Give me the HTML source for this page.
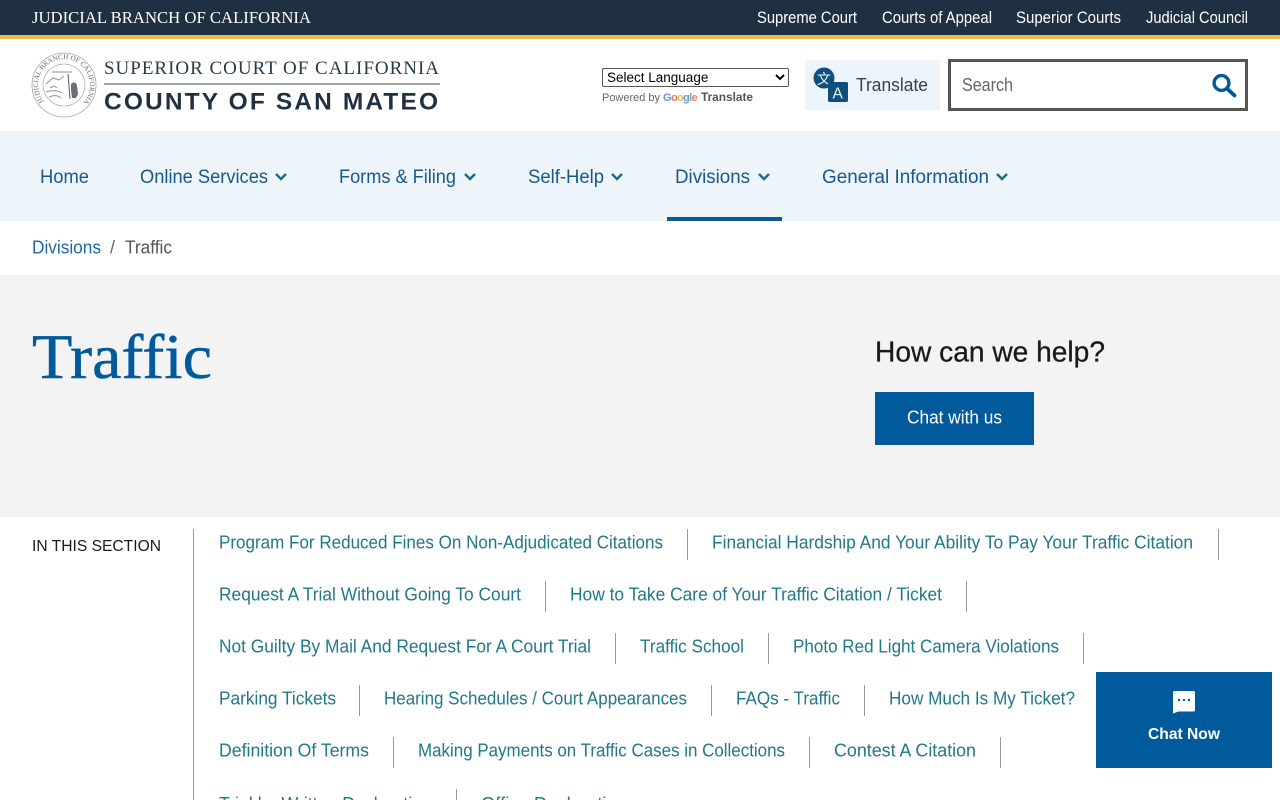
<!DOCTYPE html>
<html lang="en"><head><meta charset="utf-8"><title>Traffic - Superior Court of San Mateo</title>
<style>
html,body{margin:0;padding:0;background:#fff;width:1280px;height:800px;overflow:hidden}
.b{position:absolute}
svg{position:absolute;left:0;top:0}
text{font-family:"Liberation Sans",sans-serif}
.s{font-family:"Liberation Serif",serif}
select{position:absolute;left:602px;top:68px;width:187px;height:19px;font:13.5px "Liberation Sans",sans-serif;color:#000;background:#fff;border:1px solid #555;border-radius:2px;padding:0;margin:0;box-sizing:border-box}
input{position:absolute;left:948px;top:59px;width:300px;height:52px;box-sizing:border-box;border:3px solid #555;background:#fff;padding:0 50px 0 11px;font:18px "Liberation Sans",sans-serif;color:#555;outline:0;margin:0}
.nav text{font-size:19px;fill:#17598c}
.sec text{font-size:18px;fill:#21788a}
.top text{font-size:16.5px;fill:#fff}
</style></head><body>
<div class="b" style="left:0;top:0;width:1280px;height:35px;background:#1f3042"></div>
<div class="b" style="left:0;top:35px;width:1280px;height:4px;background:#efbb47"></div>
<div class="b" style="left:805px;top:60px;width:135px;height:50px;background:#edf4fa"></div>
<div class="b" style="left:0;top:131px;width:1280px;height:90px;background:#edf4fa"></div>
<div class="b" style="left:667px;top:217px;width:115px;height:4px;background:#0f5a8a"></div>
<div class="b" style="left:0;top:275px;width:1280px;height:242px;background:#f3f3f3"></div>
<div class="b" style="left:875px;top:392px;width:159px;height:53px;background:#005a9c"></div>
<div class="b" style="left:193px;top:529px;width:1px;height:271px;background:#999"></div>
<select><option>Select Language</option></select>
<input type="text" aria-label="Search">

<svg width="1280" height="800" viewBox="0 0 1280 800" style="pointer-events:none">
<g class="top">
<text x="32" y="23" textLength="279" lengthAdjust="spacingAndGlyphs" style="font-family:'Liberation Serif',serif;font-size:17px">JUDICIAL BRANCH OF CALIFORNIA</text>
<text x="757" y="23" textLength="100" lengthAdjust="spacingAndGlyphs">Supreme Court</text>
<text x="882" y="23" textLength="110" lengthAdjust="spacingAndGlyphs">Courts of Appeal</text>
<text x="1016" y="23" textLength="105" lengthAdjust="spacingAndGlyphs">Superior Courts</text>
<text x="1146" y="23" textLength="102" lengthAdjust="spacingAndGlyphs">Judicial Council</text>
</g>

<!-- seal -->
<g fill="none" stroke="#a2a6aa">
<circle cx="64" cy="85" r="32" stroke-width=".8"/>
<circle cx="64" cy="85" r="21" stroke-width=".7"/>
</g>
<defs><path id="ring" d="M44 101.600A26 26 0 1 1 84 101.600"/></defs>
<text font-size="7" fill="#666" style="font-family:'Liberation Serif',serif"><textPath href="#ring" textLength="118" lengthAdjust="spacing">JUDICIAL BRANCH OF CALIFORNIA</textPath></text>
<path d="M46 84l7-6 6 2 5-4M46 92c6-2 11-2 16 1M49 97c4-2 9-2 12 1M50 88l4-2 3 2M52 72h20" fill="none" stroke="#8f9499" stroke-width="1"/>
<path d="M68 74l2 25" stroke="#555b62" stroke-width="1" fill="none"/>
<path d="M71 84c3-3 6-1 6 2l1 8-2 4h-4l-1-8z" fill="#6a7076"/>

<text x="104" y="74" font-size="19" fill="#2b3a4a" textLength="335" lengthAdjust="spacing" style="font-family:'Liberation Serif',serif">SUPERIOR COURT OF CALIFORNIA</text>
<rect x="104" y="83" width="336" height="2" fill="#a0a5aa"/>
<text x="104" y="109.500" font-size="24.500" font-weight="700" fill="#1f3042" textLength="334" lengthAdjust="spacing">COUNTY OF SAN MATEO</text>

<!-- powered by -->
<text x="602" y="101" font-size="11" fill="#666" textLength="58" lengthAdjust="spacingAndGlyphs">Powered by</text>
<g font-size="11" font-weight="700">
<text x="663" y="101" fill="#6d95dc">G</text><text x="671" y="101" fill="#e07a6e">o</text><text x="677" y="101" fill="#e8c05c">o</text><text x="683" y="101" fill="#6d95dc">g</text><text x="689" y="101" fill="#74b57e">l</text><text x="691.500" y="101" fill="#e07a6e">e</text>
</g>
<text x="701" y="101" font-size="12" font-weight="700" fill="#555" textLength="52" lengthAdjust="spacingAndGlyphs">Translate</text>

<!-- translate icon -->
<circle cx="824" cy="78" r="10.500" fill="#0f4f80"/>
<text x="817" y="84" font-size="14" fill="#edf4fa" style="font-family:'Noto Sans CJK SC',sans-serif">文</text>
<rect x="828" y="82" width="20" height="20" rx="1.500" fill="#0f4f80"/>
<text x="832.500" y="98.500" font-size="15.500" fill="#edf4fa">A</text>
<text x="856" y="91" font-size="18.500" fill="#333f4d" textLength="72" lengthAdjust="spacingAndGlyphs">Translate</text>

<!-- search -->
<text x="962" y="91" font-size="18" fill="#666" textLength="51" lengthAdjust="spacingAndGlyphs">Search</text>
<circle cx="1221.500" cy="83" r="7.400" fill="none" stroke="#00599c" stroke-width="3.400"/>
<path d="M1227.500 89l7 6.500" stroke="#00599c" stroke-width="3.800" stroke-linecap="round"/>

<!-- nav -->
<g class="nav">
<text x="40" y="183" textLength="49" lengthAdjust="spacingAndGlyphs">Home</text>
<text x="140" y="183" textLength="128" lengthAdjust="spacingAndGlyphs">Online Services</text>
<text x="339" y="183" textLength="117" lengthAdjust="spacingAndGlyphs">Forms &amp; Filing</text>
<text x="528" y="183" textLength="76" lengthAdjust="spacingAndGlyphs">Self-Help</text>
<text x="675" y="183" textLength="75" lengthAdjust="spacingAndGlyphs">Divisions</text>
<text x="822" y="183" textLength="167" lengthAdjust="spacingAndGlyphs">General Information</text>
</g>
<g fill="none" stroke="#1a6b80" stroke-width="2.400">
<path d="M276 174l5 5 5-5"/>
<path d="M465 174l5 5 5-5"/>
<path d="M612 174l5 5 5-5"/>
<path d="M759 174l5 5 5-5"/>
<path d="M997 174l5 5 5-5"/>
</g>

<!-- breadcrumb -->
<text x="32" y="253.500" font-size="18" fill="#1f6aa5" textLength="69" lengthAdjust="spacingAndGlyphs">Divisions</text>
<text x="110" y="253.500" font-size="18" fill="#666">/</text>
<text x="125" y="253.500" font-size="18" fill="#555" textLength="47" lengthAdjust="spacingAndGlyphs">Traffic</text>

<!-- hero -->
<text x="32" y="378" font-size="64" fill="#005a9c" stroke="#005a9c" stroke-width=".5" textLength="180" lengthAdjust="spacingAndGlyphs" style="font-family:'Liberation Serif',serif">Traffic</text>
<text x="875" y="361.500" font-size="29" fill="#1a1a1a" stroke="#1a1a1a" stroke-width=".3" textLength="230" lengthAdjust="spacingAndGlyphs">How can we help?</text>
<text x="907" y="423.500" font-size="18" fill="#fff" textLength="95" lengthAdjust="spacingAndGlyphs">Chat with us</text>

<!-- section -->
<text x="32" y="551" font-size="15.500" fill="#1a1a1a" textLength="129" lengthAdjust="spacingAndGlyphs">IN THIS SECTION</text>
<g class="sec">
<text x="219" y="548.500" textLength="444" lengthAdjust="spacingAndGlyphs">Program For Reduced Fines On Non-Adjudicated Citations</text>
<text x="712" y="548.500" textLength="481" lengthAdjust="spacingAndGlyphs">Financial Hardship And Your Ability To Pay Your Traffic Citation</text>
<text x="219" y="600.500" textLength="302" lengthAdjust="spacingAndGlyphs">Request A Trial Without Going To Court</text>
<text x="570" y="600.500" textLength="372" lengthAdjust="spacingAndGlyphs">How to Take Care of Your Traffic Citation / Ticket</text>
<text x="219" y="652.500" textLength="372" lengthAdjust="spacingAndGlyphs">Not Guilty By Mail And Request For A Court Trial</text>
<text x="640" y="652.500" textLength="104" lengthAdjust="spacingAndGlyphs">Traffic School</text>
<text x="793" y="652.500" textLength="266" lengthAdjust="spacingAndGlyphs">Photo Red Light Camera Violations</text>
<text x="219" y="704.500" textLength="117" lengthAdjust="spacingAndGlyphs">Parking Tickets</text>
<text x="384" y="704.500" textLength="303" lengthAdjust="spacingAndGlyphs">Hearing Schedules / Court Appearances</text>
<text x="736" y="704.500" textLength="104" lengthAdjust="spacingAndGlyphs">FAQs - Traffic</text>
<text x="889" y="704.500" textLength="186" lengthAdjust="spacingAndGlyphs">How Much Is My Ticket?</text>
<text x="219" y="756.500" textLength="150" lengthAdjust="spacingAndGlyphs">Definition Of Terms</text>
<text x="418" y="756.500" textLength="367" lengthAdjust="spacingAndGlyphs">Making Payments on Traffic Cases in Collections</text>
<text x="834" y="756.500" textLength="142" lengthAdjust="spacingAndGlyphs">Contest A Citation</text>
<text x="219" y="810" textLength="213" lengthAdjust="spacingAndGlyphs">Trial by Written Declaration</text>
<text x="481" y="810" textLength="146" lengthAdjust="spacingAndGlyphs">Office Declaration</text>
</g>
<g fill="#999">
<rect x="687" y="529" width="1" height="31"/><rect x="1218" y="529" width="1" height="31"/>
<rect x="545" y="581" width="1" height="31"/><rect x="966" y="581" width="1" height="31"/>
<rect x="615" y="633" width="1" height="31"/><rect x="768" y="633" width="1" height="31"/><rect x="1083" y="633" width="1" height="31"/>
<rect x="359" y="685" width="1" height="31"/><rect x="711" y="685" width="1" height="31"/><rect x="864" y="685" width="1" height="31"/>
<rect x="393" y="737" width="1" height="31"/><rect x="809" y="737" width="1" height="31"/><rect x="1000" y="737" width="1" height="31"/>
<rect x="456" y="789" width="1" height="11"/>
</g>

<!-- chat widget -->
<rect x="1096" y="672" width="176" height="96" fill="#005a9c"/>
<path d="M1174.500 691h19a1.500 1.500 0 0 1 1.500 1.500v17.500a1.500 1.500 0 0 1-1.500 1.500h-15l-5.500 2v-21a1.500 1.500 0 0 1 1.500-1.500z" fill="#fff"/>
<circle cx="1179" cy="700" r="1.200" fill="#005a9c"/><circle cx="1184" cy="700" r="1.200" fill="#005a9c"/><circle cx="1189" cy="700" r="1.200" fill="#005a9c"/>
<text x="1148" y="739" font-size="16" font-weight="700" fill="#fff" textLength="72" lengthAdjust="spacingAndGlyphs">Chat Now</text>
</svg>
</body></html>
